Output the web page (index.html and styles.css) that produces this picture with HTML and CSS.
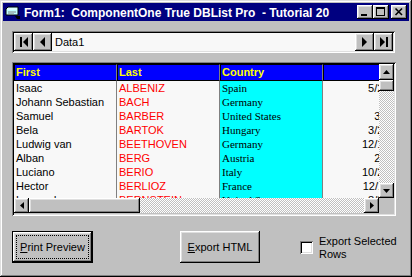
FILE: index.html
```html
<!DOCTYPE html>
<html lang="en">
<head>
    <meta charset="UTF-8">
    <title>Form1: ComponentOne True DBList Pro - Tutorial 20</title>
    <link rel="stylesheet" href="styles.css">
</head>
<body>
    <div class="window">
        <div class="titlebar">
            <svg class="app-icon" width="16" height="16" viewBox="0 0 16 16">
                <path d="M1 5 L3 3 H13 V11 H1 Z" fill="#c0ffff" stroke="#000" stroke-width="1"/>
                <path d="M2 5 H12" stroke="#fff" stroke-width="1"/>
                <path d="M3 8 H11 M3 10 H9" stroke="#808080" stroke-width="1"/>
                <path d="M10 12 H15 V15 H12 Z" fill="#000"/>
            </svg>
            <span class="title">Form1:  ComponentOne True DBList Pro  - Tutorial 20</span>
            <div class="caption-buttons">
                <div class="cap-btn">
                    <svg width="16" height="14" viewBox="0 0 16 14"><rect x="4" y="9" width="6" height="2"/></svg>
                </div>
                <div class="cap-btn">
                    <svg width="16" height="14" viewBox="0 0 16 14"><path d="M3 2 H12 V11 H3 Z M4 4 V10 H11 V4 Z" fill-rule="evenodd"/></svg>
                </div>
                <div class="cap-btn close">
                    <svg width="16" height="14" viewBox="0 0 16 14"><path d="M4.5 3.5 L11 10 M11 3.5 L4.5 10" stroke="#000" stroke-width="1.6"/></svg>
                </div>
            </div>
        </div>

        <div class="client">
            <!-- data control -->
            <div class="datactl">
                <div class="nav-btn">
                    <svg width="8" height="10" viewBox="0 0 8 10"><rect width="2" height="10"/><path d="M8 0 V10 L3 5 Z"/></svg>
                </div>
                <div class="nav-btn">
                    <svg width="5" height="10" viewBox="0 0 5 10"><path d="M5 0 V10 L0 5 Z"/></svg>
                </div>
                <div class="data-caption">Data1</div>
                <div class="nav-btn">
                    <svg width="5" height="10" viewBox="0 0 5 10"><path d="M0 0 V10 L5 5 Z"/></svg>
                </div>
                <div class="nav-btn">
                    <svg width="8" height="10" viewBox="0 0 8 10"><path d="M0 0 V10 L5 5 Z"/><rect x="6" width="2" height="10"/></svg>
                </div>
            </div>

            <!-- list grid -->
            <div class="grid">
                <div class="grid-body">
                    <div class="row header">
                        <div class="cell">First</div>
                        <div class="cell">Last</div>
                        <div class="cell">Country</div>
                        <div class="cell date"></div>
                    </div>
                    <div class="row"><div class="cell">Isaac</div><div class="cell last">ALBENIZ</div><div class="cell country">Spain</div><div class="cell date">5/29/1860</div></div>
                    <div class="row"><div class="cell">Johann Sebastian</div><div class="cell last">BACH</div><div class="cell country">Germany</div><div class="cell date"></div></div>
                    <div class="row"><div class="cell">Samuel</div><div class="cell last">BARBER</div><div class="cell country">United States</div><div class="cell date">3/9/1910</div></div>
                    <div class="row"><div class="cell">Bela</div><div class="cell last">BARTOK</div><div class="cell country">Hungary</div><div class="cell date">3/25/1881</div></div>
                    <div class="row"><div class="cell">Ludwig van</div><div class="cell last">BEETHOVEN</div><div class="cell country">Germany</div><div class="cell date">12/16/1770</div></div>
                    <div class="row"><div class="cell">Alban</div><div class="cell last">BERG</div><div class="cell country">Austria</div><div class="cell date">2/9/1885</div></div>
                    <div class="row"><div class="cell">Luciano</div><div class="cell last">BERIO</div><div class="cell country">Italy</div><div class="cell date">10/24/1925</div></div>
                    <div class="row"><div class="cell">Hector</div><div class="cell last">BERLIOZ</div><div class="cell country">France</div><div class="cell date">12/11/1803</div></div>
                    <div class="row"><div class="cell">Leonard</div><div class="cell last">BERNSTEIN</div><div class="cell country">United States</div><div class="cell date">8/25/1918</div></div>
                </div>

                <div class="vscroll">
                    <div class="sb-btn up">
                        <svg width="7" height="4" viewBox="0 0 7 4"><path d="M3.5 0 L7 4 H0 Z"/></svg>
                    </div>
                    <div class="thumb"></div>
                    <div class="sb-btn down">
                        <svg width="7" height="4" viewBox="0 0 7 4"><path d="M0 0 H7 L3.5 4 Z"/></svg>
                    </div>
                </div>

                <div class="hscroll">
                    <div class="sb-btn">
                        <svg width="4" height="7" viewBox="0 0 4 7"><path d="M4 0 V7 L0 3.5 Z"/></svg>
                    </div>
                    <div class="thumb"></div>
                    <div class="sb-btn right">
                        <svg width="4" height="7" viewBox="0 0 4 7"><path d="M0 0 V7 L4 3.5 Z"/></svg>
                    </div>
                </div>
                <div class="corner"></div>
            </div>

            <!-- bottom controls -->
            <div class="actions">
                <button class="btn default"><span class="focus"><u>P</u>rint Preview</span></button>
                <button class="btn export"><u>E</u>xport HTML</button>
                <div class="check">
                    <div class="checkbox"></div>
                    <div class="check-label">Export Selected<br>Rows</div>
                </div>
            </div>
        </div>
    </div>
</body>
</html>
```

FILE: styles.css
```css
* {
    box-sizing: border-box;
}

body {
    margin: 0;
    font-family: "Liberation Sans", Arial, sans-serif;
    font-size: 11px;
    color: #000;
    background: #c0c0c0;
}

/* 3d bevels */
.cap-btn, .nav-btn, .sb-btn, .thumb, .btn {
    background: #c0c0c0;
    box-shadow: inset -1px -1px #000, inset 1px 1px #fff, inset -2px -2px #808080, inset 2px 2px #dfdfdf;
}

.datactl, .grid, .checkbox {
    box-shadow: inset 1px 1px #808080, inset -1px -1px #fff, inset 2px 2px #000, inset -2px -2px #dfdfdf;
}

.window {
    width: 412px;
    height: 277px;
    padding: 3px;
    background: #c0c0c0;
    box-shadow: inset -1px -1px #000, inset 1px 1px #dfdfdf, inset -2px -2px #808080, inset 2px 2px #fff;
    display: flex;
    flex-direction: column;
}

.titlebar {
    height: 18px;
    flex: none;
    background: #000080;
    color: #fff;
    display: flex;
    align-items: center;
    padding: 0 2px;
}

.app-icon {
    flex: none;
}

.title {
    flex: 1;
    margin-left: 3px;
    padding-top: 1px;
    font-size: 12px;
    font-weight: bold;
    white-space: pre;
}

.caption-buttons {
    display: flex;
}

.cap-btn {
    width: 16px;
    height: 14px;
}

.cap-btn svg {
    display: block;
}

.cap-btn.close {
    margin-left: 2px;
}

.client {
    flex: 1;
    padding: 10px 0 0 9px;
}

.datactl {
    width: 383px;
    height: 22px;
    padding: 2px;
    display: flex;
}

.nav-btn {
    width: 19px;
    height: 18px;
    flex: none;
    display: flex;
    align-items: center;
    justify-content: center;
}

.data-caption {
    flex: 1;
    background: #f8f8f8;
    padding-left: 3px;
    line-height: 18px;
}

.grid {
    margin-top: 9px;
    width: 384px;
    height: 154px;
    padding: 2px;
    background: #c0c0c0;
    display: grid;
    grid-template-columns: 365px 15px;
    grid-template-rows: 134px 16px;
}

.grid-body {
    overflow: hidden;
    background: #f8f8f8;
}

.row {
    display: flex;
    height: 14px;
    line-height: 14px;
    white-space: nowrap;
}

.cell {
    flex: none;
    width: 103px;
    padding-left: 2px;
    border-right: 1px solid #808080;
    overflow: hidden;
}

.cell.last {
    color: #f00;
}

.cell.country {
    background: #0ff;
    font-family: "Liberation Serif", "Times New Roman", serif;
    font-size: 11px;
}

.cell.date {
    width: 96px;
    padding-right: 2px;
    text-align: right;
    border-right: none;
}

.row.header {
    height: 17px;
}

.header .cell {
    background: #00f;
    color: #ff0;
    font-weight: bold;
    line-height: 15px;
    padding-left: 1px;
    border: 1px solid #000;
    border-right-color: #808080;
}

.header .cell.date {
    border-right: none;
}

.vscroll, .hscroll .track, .hscroll {
    background-color: #fff;
    background-image: repeating-conic-gradient(#c0c0c0 0 25%, #fff 0 50%);
    background-size: 2px 2px;
}

.vscroll {
    display: flex;
    flex-direction: column;
}

.sb-btn {
    flex: none;
    display: flex;
    align-items: center;
    justify-content: center;
}

.sb-btn svg {
    display: block;
}

.vscroll .sb-btn {
    height: 15px;
}

.vscroll .sb-btn.up {
    height: 16px;
}

.vscroll .sb-btn.down {
    margin-top: auto;
}

.vscroll .thumb {
    height: 11px;
}

.hscroll {
    display: flex;
    height: 15px;
}

.hscroll .sb-btn {
    width: 15px;
}

.hscroll .thumb {
    width: 111px;
}

.hscroll .sb-btn.right {
    margin-left: auto;
}

.corner {
    background: #c0c0c0;
}

.actions {
    display: flex;
    align-items: flex-start;
    margin-top: 15px;
}

.btn {
    height: 32px;
    border: none;
    padding: 0;
    font: inherit;
    color: #000;
}

.btn.default {
    width: 81px;
    border: 1px solid #000;
    padding: 3px;
    display: flex;
}

.focus {
    flex: 1;
    display: flex;
    align-items: center;
    justify-content: center;
    border: 1px dotted #000;
}

.btn.export {
    width: 80px;
    margin-left: 87px;
}

.check {
    display: flex;
    margin-left: 40px;
}

.checkbox {
    width: 13px;
    height: 13px;
    margin-top: 10px;
    background: #fff;
}

.check-label {
    margin-left: 6px;
    margin-top: 4px;
    line-height: 13px;
}
```
